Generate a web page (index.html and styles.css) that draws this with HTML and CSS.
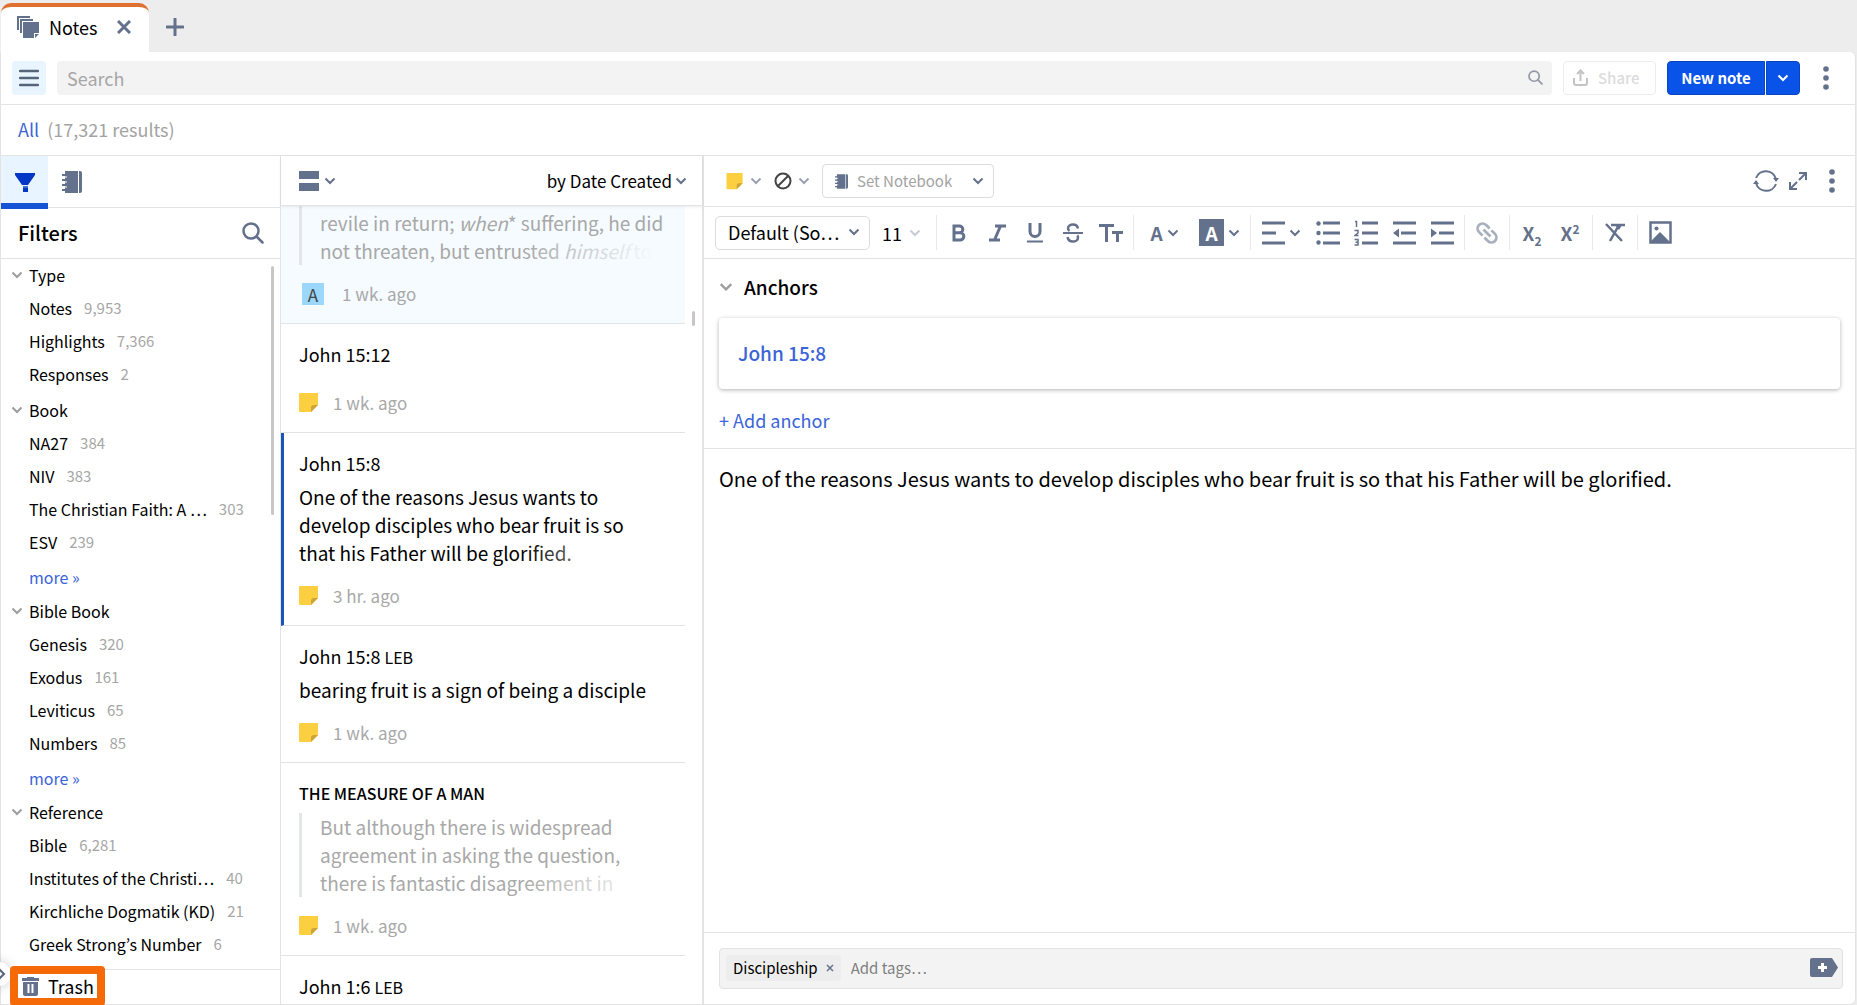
FILE: index.html
```html
<!DOCTYPE html>
<html lang="en">
<head>
  <meta charset="UTF-8">
  <meta name="viewport" content="width=device-width, initial-scale=1.0">
  <title>Notes</title>
  <link rel="stylesheet" href="styles.css">
</head>
<body>

  <!-- Shared icons -->
  <svg class="sprite" aria-hidden="true">
    <symbol id="chevron" viewBox="0 0 12 12"><path d="M1.5 3.5 6 8l4.500-4.500" fill="none" stroke="currentColor" stroke-width="2"/></symbol>
    <symbol id="note" viewBox="0 0 20 20"><path d="M1 0h18v12l-7 7H1a1 1 0 0 1-1-1V1a1 1 0 0 1 1-1z" fill="#fbcf3f"/><path d="M12 19v-4a3 3 0 0 1 3-3h4z" fill="#cda33a"/></symbol>
    <symbol id="notebook" viewBox="0 0 20 22"><path d="M3 0h13v22H3zM17 0h1a2 2 0 0 1 2 2v18a2 2 0 0 1-2 2h-1z" fill="currentColor"/><path d="M0 4h5M0 9h5M0 14h5M0 19h5" stroke="currentColor" stroke-width="2"/><path d="M3 6h2M3 11h2M3 16h2" stroke="#fff" stroke-width="1"/></symbol>
    <symbol id="search" viewBox="0 0 22 22"><circle cx="9" cy="9" r="7.500" fill="none" stroke="currentColor" stroke-width="2.500"/><path d="m14.500 14.500 6 6" stroke="currentColor" stroke-width="2.500" stroke-linecap="round"/></symbol>
    <symbol id="dots" viewBox="0 0 6 24"><circle cx="3" cy="3" r="2.800" fill="currentColor"/><circle cx="3" cy="12" r="2.800" fill="currentColor"/><circle cx="3" cy="21" r="2.800" fill="currentColor"/></symbol>
  </svg>

  <!-- Tabs -->
  <header class="tabs">
    <div class="tab">
      <svg class="tab-icon" viewBox="0 0 22 22"><path d="M0 0h13v2H2v12H0zM3 3h13v2H5v12H3z" fill="#64718c"/><path d="M6 6h16v11h-5v5H6z" fill="#64718c"/><path d="M18 22v-4h4z" fill="#64718c"/></svg>
      <span>Notes</span>
      <button class="icon-btn close" aria-label="Close tab"><svg width="14" height="14" viewBox="0 0 14 14"><path d="m1 1 12 12M13 1 1 13" stroke="currentColor" stroke-width="3"/></svg></button>
    </div>
    <button class="icon-btn add-tab" aria-label="New tab"><svg width="18" height="18" viewBox="0 0 18 18"><path d="M9 1v16M1 9h16" stroke="currentColor" stroke-width="3" stroke-linecap="round"/></svg></button>
  </header>

  <div class="window">
    <!-- Toolbar -->
    <div class="toolbar">
      <button class="menu-btn" aria-label="Menu"><svg width="20" height="18" viewBox="0 0 20 18"><path d="M1 2h18M1 9h18M1 16h18" stroke="#56647a" stroke-width="2.500" stroke-linecap="round"/></svg></button>
      <div class="search-box">
        <input type="search" placeholder="Search" aria-label="Search">
        <svg width="15" height="15"><use href="#search"/></svg>
      </div>
      <button class="share" disabled>
        <svg width="15" height="17" viewBox="0 0 15 17"><path d="M1 9v5a2 2 0 0 0 2 2h9a2 2 0 0 0 2-2V9M7.500 12V2M4 5l3.500-3.500L11 5" fill="none" stroke="#c4c4c4" stroke-width="2"/></svg>
        Share
      </button>
      <div class="split">
        <button class="primary">New note</button>
        <button class="primary arrow" aria-label="More note types"><svg width="12" height="12"><use href="#chevron"/></svg></button>
      </div>
      <button class="icon-btn" aria-label="More"><svg width="6" height="24"><use href="#dots"/></svg></button>
    </div>

    <div class="results"><a href="#">All</a> <span>(17,321 results)</span></div>

    <main class="columns">
      <!-- Filters -->
      <aside class="sidebar">
        <div class="side-tabs">
          <button class="side-tab active" aria-label="Filters"><svg width="20" height="20" viewBox="0 0 20 20"><path d="M0 1h20v2l-7 10H7L0 3zM8 14h5v6H8z" fill="#0537c6"/><path d="M8 15h5" stroke="#7fa6ee" stroke-width="1"/></svg></button>
          <button class="side-tab" aria-label="Notebooks"><svg width="20" height="22"><use href="#notebook"/></svg></button>
        </div>
        <div class="side-head">
          <h2>Filters</h2>
          <button class="icon-btn" aria-label="Search filters"><svg width="22" height="22"><use href="#search"/></svg></button>
        </div>
        <nav class="filters">
          <section>
            <h3><svg width="12" height="12"><use href="#chevron"/></svg>Type</h3>
            <a href="#"><span>Notes</span><small>9,953</small></a>
            <a href="#"><span>Highlights</span><small>7,366</small></a>
            <a href="#"><span>Responses</span><small>2</small></a>
          </section>
          <section>
            <h3><svg width="12" height="12"><use href="#chevron"/></svg>Book</h3>
            <a href="#"><span>NA27</span><small>384</small></a>
            <a href="#"><span>NIV</span><small>383</small></a>
            <a href="#"><span>The Christian Faith: A …</span><small>303</small></a>
            <a href="#"><span>ESV</span><small>239</small></a>
            <a href="#" class="more">more »</a>
          </section>
          <section>
            <h3><svg width="12" height="12"><use href="#chevron"/></svg>Bible Book</h3>
            <a href="#"><span>Genesis</span><small>320</small></a>
            <a href="#"><span>Exodus</span><small>161</small></a>
            <a href="#"><span>Leviticus</span><small>65</small></a>
            <a href="#"><span>Numbers</span><small>85</small></a>
            <a href="#" class="more">more »</a>
          </section>
          <section>
            <h3><svg width="12" height="12"><use href="#chevron"/></svg>Reference</h3>
            <a href="#"><span>Bible</span><small>6,281</small></a>
            <a href="#"><span>Institutes of the Christi…</span><small>40</small></a>
            <a href="#"><span>Kirchliche Dogmatik (KD)</span><small>21</small></a>
            <a href="#"><span>Greek Strong’s Number</span><small>6</small></a>
          </section>
          <div class="thumb"></div>
        </nav>
        <div class="side-foot">
          <div class="expander"><svg width="8" height="12" viewBox="0 0 8 12"><path d="m1 1 5 5-5 5" fill="none" stroke="#56647a" stroke-width="2"/></svg></div>
          <button class="trash">
            <svg width="17" height="19" viewBox="0 0 17 19"><path d="M0 1h5V0h7v1h5v3H0zM1 5h15v12a2 2 0 0 1-2 2H3a2 2 0 0 1-2-2z" fill="#64718c"/><path d="M6.500 7v9M10.500 7v9" stroke="#fff" stroke-width="2"/></svg>
            Trash
          </button>
        </div>
      </aside>

      <!-- Note list -->
      <section class="list">
        <div class="list-head">
          <button class="icon-btn view" aria-label="View"><svg width="20" height="20" viewBox="0 0 20 20"><path d="M0 0h20v8H0zM0 12h20v8H0z" fill="currentColor"/></svg><svg width="12" height="12"><use href="#chevron"/></svg></button>
          <button class="sort">by Date Created<svg width="12" height="12"><use href="#chevron"/></svg></button>
        </div>
        <div class="notes">
          <article class="note visited">
            <blockquote class="fade">revile in return; <i>when</i>* suffering, he did not threaten, but entrusted <i>himself</i> to</blockquote>
            <footer><span class="mark">A</span>1 wk. ago</footer>
          </article>
          <article class="note">
            <h3>John 15:12</h3>
            <footer><svg width="20" height="20"><use href="#note"/></svg>1 wk. ago</footer>
          </article>
          <article class="note selected">
            <h3>John 15:8</h3>
            <p class="fade">One of the reasons Jesus wants to develop disciples who bear fruit is so that his Father will be glorified.</p>
            <footer><svg width="20" height="20"><use href="#note"/></svg>3 hr. ago</footer>
          </article>
          <article class="note">
            <h3>John 15:8 <small>LEB</small></h3>
            <p>bearing fruit is a sign of being a disciple</p>
            <footer><svg width="20" height="20"><use href="#note"/></svg>1 wk. ago</footer>
          </article>
          <article class="note">
            <h3 class="caps">THE MEASURE OF A MAN</h3>
            <blockquote class="fade">But although there is widespread agreement in asking the question, there is fantastic disagreement in</blockquote>
            <footer><svg width="20" height="20"><use href="#note"/></svg>1 wk. ago</footer>
          </article>
          <article class="note">
            <h3>John 1:6 <small>LEB</small></h3>
          </article>
          <div class="thumb"></div>
        </div>
      </section>

      <!-- Editor -->
      <section class="editor">
        <div class="note-bar">
          <button class="icon-btn pick" aria-label="Note icon"><svg width="18" height="17"><use href="#note"/></svg><svg class="soft" width="12" height="12"><use href="#chevron"/></svg></button>
          <button class="icon-btn pick" aria-label="Highlight style"><svg width="18" height="18" viewBox="0 0 18 18"><circle cx="9" cy="9" r="7.500" fill="none" stroke="#444" stroke-width="2"/><path d="M4 14 14 4" stroke="#444" stroke-width="2"/></svg><svg class="soft" width="12" height="12"><use href="#chevron"/></svg></button>
          <label class="select notebook">
            <svg width="13" height="15"><use href="#notebook"/></svg>
            <select aria-label="Notebook"><option>Set Notebook</option></select>
            <svg width="12" height="12"><use href="#chevron"/></svg>
          </label>
          <span class="spacer"></span>
          <button class="icon-btn" aria-label="Sync"><svg width="26" height="24" viewBox="0 0 26 24"><path d="M3 9a10.500 10.500 0 0 1 20 1M23 15a10.500 10.500 0 0 1-20-1" fill="none" stroke="currentColor" stroke-width="2"/><path d="M20 9h6l-3 4zM0 15h6l-3-4z" fill="currentColor"/></svg></button>
          <button class="icon-btn expand" aria-label="Expand"><svg width="18" height="18" viewBox="0 0 18 18"><path d="M10 1h7v7M17 1l-7 7M8 17H1v-7M1 17l7-7" fill="none" stroke="currentColor" stroke-width="2"/></svg></button>
          <button class="icon-btn" aria-label="More"><svg width="6" height="24"><use href="#dots"/></svg></button>
        </div>

        <div class="format-bar">
          <label class="select font">
            <select aria-label="Font"><option>Default (So…</option></select>
            <svg width="12" height="12"><use href="#chevron"/></svg>
          </label>
          <label class="select size">
            <select aria-label="Font size"><option>11</option></select>
            <svg width="12" height="12"><use href="#chevron"/></svg>
          </label>
          <hr>
          <button aria-label="Bold"><svg width="16" height="18" viewBox="0 0 16 18"><path d="M3 2h5.500a3.300 3.300 0 0 1 0 6.700H3zM3 8.700h6.200a3.600 3.600 0 0 1 0 7.300H3z" fill="none" stroke="currentColor" stroke-width="3"/></svg></button>
          <button aria-label="Italic"><svg width="17" height="18" viewBox="0 0 17 18"><path d="M6 2h11M0 16h11M11.500 2l-6 14" fill="none" stroke="currentColor" stroke-width="3"/></svg></button>
          <button aria-label="Underline"><svg width="18" height="20" viewBox="0 0 18 20"><path d="M4 0v8.500a5 5 0 0 0 10 0V0" fill="none" stroke="currentColor" stroke-width="3"/><path d="M1 18.500h16" stroke="currentColor" stroke-width="2"/></svg></button>
          <button aria-label="Strikethrough"><svg width="20" height="20" viewBox="0 0 20 20"><path d="M15 5.500C14.500 2.800 12.500 1.500 10 1.500S5 2.800 5 5.300c0 1.200.5 2 1.500 2.700M4.500 14c.5 3 3 4.500 5.500 4.500s5-1.300 5-3.800c0-.900-.3-1.700-.8-2.200" fill="none" stroke="currentColor" stroke-width="2.500"/><path d="M0 10h20" stroke="currentColor" stroke-width="2"/></svg></button>
          <button aria-label="Text case"><svg width="24" height="18" viewBox="0 0 24 18"><path d="M0 1.500h15M7.500 1.500V18M13 8.500h11M18.500 8.500V18" fill="none" stroke="currentColor" stroke-width="3"/></svg></button>
          <hr>
          <button class="wide" aria-label="Text color"><b>A</b><svg width="12" height="12"><use href="#chevron"/></svg></button>
          <button class="wide" aria-label="Background color"><b class="boxed">A</b><svg width="12" height="12"><use href="#chevron"/></svg></button>
          <hr>
          <button class="wide" aria-label="Align"><svg width="23" height="24" viewBox="0 0 23 24"><path d="M0 2h23M0 12h14M0 22h23" stroke="currentColor" stroke-width="3"/></svg><svg width="12" height="12"><use href="#chevron"/></svg></button>
          <button aria-label="Bulleted list"><svg width="24" height="24" viewBox="0 0 24 24"><path d="M7 2h17M7 12h17M7 22h17" stroke="currentColor" stroke-width="3"/><circle cx="2.500" cy="2.500" r="2.200" fill="currentColor"/><circle cx="2.500" cy="12" r="2.200" fill="currentColor"/><circle cx="2.500" cy="21.500" r="2.200" fill="currentColor"/></svg></button>
          <button aria-label="Numbered list"><svg width="24" height="26" viewBox="0 0 24 26"><path d="M8 3h16M8 13h16M8 23h16" stroke="currentColor" stroke-width="3"/><path d="M1 1.500h1.500V7M.5 10.500h3.500V13L1 15.500h3.500M.5 19.500h3.500v5.500H.5M1.500 22.300h2" fill="none" stroke="currentColor" stroke-width="1.500"/></svg></button>
          <button aria-label="Outdent"><svg width="23" height="24" viewBox="0 0 23 24"><path d="M0 2h23M8 12h15M0 22h23" stroke="currentColor" stroke-width="3"/><path d="M6 7.500v9L0 12z" fill="currentColor"/></svg></button>
          <button aria-label="Indent"><svg width="23" height="24" viewBox="0 0 23 24"><path d="M0 2h23M8 12h15M0 22h23" stroke="currentColor" stroke-width="3"/><path d="M0 7.500v9l6-4.500z" fill="currentColor"/></svg></button>
          <hr>
          <button class="off" aria-label="Link"><svg width="30" height="30" viewBox="0 0 24 24"><g transform="rotate(45 12 12)" fill="none" stroke="currentColor" stroke-width="2.200"><path d="M11 8H7a4 4 0 0 0 0 8h4M13 8h4a4 4 0 0 1 0 8h-4M8 12h8"/></g></svg></button>
          <hr>
          <button aria-label="Subscript"><b>X<sub>2</sub></b></button>
          <button aria-label="Superscript"><b>X<sup>2</sup></b></button>
          <hr>
          <button aria-label="Clear formatting"><svg width="20" height="19" viewBox="0 0 20 19"><path d="M6 2h14M14 2 5 18M1 1l16 17" fill="none" stroke="currentColor" stroke-width="2.500"/><path d="M10 2h7l-3 5z" fill="currentColor"/></svg></button>
          <hr>
          <button aria-label="Insert image"><svg width="23" height="23" viewBox="0 0 23 23"><path d="M1.500 1.500h20v20h-20z" fill="none" stroke="currentColor" stroke-width="2.500"/><circle cx="7.500" cy="7.500" r="2" fill="currentColor"/><path d="m2 20 9-9 10 10v1H2z" fill="currentColor"/></svg></button>
        </div>

        <div class="anchors">
          <h2><svg width="14" height="14"><use href="#chevron"/></svg>Anchors</h2>
          <div class="card"><a href="#">John 15:8</a></div>
          <a href="#" class="add-anchor">+ Add anchor</a>
        </div>

        <textarea class="content" aria-label="Note text">One of the reasons Jesus wants to develop disciples who bear fruit is so that his Father will be glorified.</textarea>

        <div class="tag-row">
          <div class="tag-box">
            <span class="chip">Discipleship <button aria-label="Remove tag"><svg width="8" height="8" viewBox="0 0 8 8"><path d="m1 1 6 6M7 1 1 7" stroke="currentColor" stroke-width="1.500"/></svg></button></span>
            <input type="text" placeholder="Add tags…" aria-label="Add tags">
            <button class="tag-add" aria-label="Add tag"><svg width="28" height="19" viewBox="0 0 28 19"><path d="M2 0h20l6 9.500-6 9.500H2a2 2 0 0 1-2-2V2a2 2 0 0 1 2-2z" fill="#64718c"/><path d="M12.500 5v9M8 9.500h9" stroke="#fff" stroke-width="3"/></svg></button>
          </div>
        </div>
      </section>
    </main>
  </div>

</body>
</html>
```

FILE: styles.css
```css
* {
  box-sizing: border-box;
}

body {
  font-family: "Noto Sans CJK KR", "Open Sans", sans-serif;
  font-size: 18px;
  line-height: 28px;
  color: #000;
  margin: 0;
  height: 100vh;
  overflow: hidden;
  display: flex;
  flex-direction: column;
  background-color: #ededed;
}

h2, h3, p, blockquote {
  margin: 0;
  font-weight: 400;
}

a {
  color: #3b64d8;
  text-decoration: none;
}

button, input, select, textarea {
  font: inherit;
  color: inherit;
  border: none;
  background: none;
  padding: 0;
  margin: 0;
}

button {
  display: flex;
  align-items: center;
  cursor: pointer;
}

select {
  appearance: none;
}

input:focus, textarea:focus {
  outline: none;
}

svg {
  flex: none;
}

.sprite {
  position: absolute;
  width: 0;
  height: 0;
}

.icon-btn {
  color: #64718c;
}

/* Tabs */
.tabs {
  display: flex;
  align-items: center;
  flex: none;
  padding: 3px 0 0 1px;
}

.tab {
  display: flex;
  align-items: center;
  width: 148px;
  height: 49px;
  padding: 0 18px 6px 16px;
  background-color: #fff;
  border-top: 4px solid #e0702f;
  border-radius: 10px 10px 0 0;
}

.tab-icon {
  width: 22px;
  height: 22px;
  margin-right: 10px;
}

.close {
  margin-left: auto;
}

.add-tab {
  margin-left: 17px;
  padding-bottom: 1px;
}

/* Window */
.window {
  flex: 1;
  min-height: 0;
  display: flex;
  flex-direction: column;
  margin: 0 1px 0 0;
  background-color: #fff;
  border: 1px solid #e3e3e3;
  border-top: none;
  border-radius: 0 6px 6px 0;
}

.toolbar {
  display: flex;
  align-items: center;
  flex: none;
  height: 53px;
  padding: 0 26px 0 11px;
  border-bottom: 1px solid #e3e3e3;
}

.menu-btn {
  justify-content: center;
  width: 34px;
  height: 34px;
  background-color: #e8f4ff;
  border-radius: 4px;
}

.search-box {
  flex: 1;
  display: flex;
  align-items: center;
  height: 34px;
  margin: 0 11px;
  padding: 0 9px 1px 10px;
  background-color: #f3f3f3;
  border-radius: 4px;
  color: #9299a5;
}

.search-box input {
  flex: 1;
}

.search-box input::placeholder {
  color: #a6a6a6;
}

.share {
  gap: 10px;
  height: 34px;
  width: 93px;
  padding: 0 9px 1px;
  font-size: 15px;
  font-weight: 500;
  color: #dcdcdc;
  border: 1px solid #ececec;
  border-radius: 4px;
}

.split {
  display: flex;
  gap: 1px;
  margin: 0 23px 0 11px;
}

.primary {
  justify-content: center;
  width: 98px;
  height: 34px;
  padding-bottom: 1px;
  font-size: 15px;
  font-weight: 700;
  color: #fff;
  background-color: #0a53e8;
  border: 1px solid #0a45c0;
  border-radius: 4px 0 0 4px;
}

.arrow {
  width: 34px;
  border-radius: 0 4px 4px 0;
}

.results {
  flex: none;
  height: 51px;
  padding: 10px 17px;
  border-bottom: 1px solid #e3e3e3;
}

.results span {
  margin-left: 4px;
  color: #a3a3a3;
}

.columns {
  flex: 1;
  min-height: 0;
  display: flex;
}

/* Filters */
.sidebar {
  display: flex;
  flex-direction: column;
  flex: none;
  width: 280px;
  border-right: 1px solid #e3e3e3;
}

.side-tabs {
  display: flex;
  flex: none;
  height: 52px;
  border-bottom: 1px solid #e3e3e3;
}

.side-tab {
  justify-content: center;
  width: 47px;
  height: 53px;
  padding-bottom: 2px;
  color: #64718c;
}

.side-tab.active {
  background-color: #e8f4ff;
  background-image: linear-gradient(#1355d4, #1355d4);
  background-position: bottom;
  background-size: 100% 6px;
  background-repeat: no-repeat;
}

.side-head {
  display: flex;
  align-items: center;
  justify-content: space-between;
  flex: none;
  height: 51px;
  padding: 0 16px 0 17px;
  border-bottom: 1px solid #e3e3e3;
}

.side-head h2 {
  font-size: 20px;
  font-weight: 500;
}

.filters {
  flex: 1;
  min-height: 0;
  overflow: hidden;
  position: relative;
  font-size: 16px;
}

.filters section {
  padding-bottom: 4px;
}

.filters h3 {
  display: flex;
  align-items: center;
  gap: 6px;
  height: 32px;
  padding-left: 10px;
  font-size: 16px;
}

.filters h3 svg {
  color: #9c9c9c;
}

.filters a {
  display: flex;
  align-items: center;
  gap: 12px;
  height: 33px;
  padding-left: 28px;
  color: #000;
}

.filters a.more {
  padding-top: 4px;
  color: #3b64d8;
}

.filters small {
  font-size: 15px;
  color: #a6a6a6;
}

.thumb {
  position: absolute;
  border-radius: 2px;
  background-color: #c9c6c8;
}

.filters .thumb {
  right: 6px;
  top: 7px;
  width: 3px;
  height: 249px;
}

.side-foot {
  position: relative;
  display: flex;
  flex: none;
  height: 35px;
  border-top: 1px solid #e3e3e3;
}

.trash {
  z-index: 1;
  gap: 9px;
  width: 95px;
  height: 40px;
  margin: -4px 0 0 9px;
  padding: 0 0 0 4px;
  background-color: #fff;
  border: 8px solid #f56a07;
  border-radius: 4px;
}

.expander {
  position: absolute;
  left: -18px;
  top: -8px;
  display: flex;
  align-items: center;
  justify-content: flex-end;
  width: 28px;
  height: 24px;
  padding-right: 5px;
  background-color: #fff;
  border-radius: 12px;
  box-shadow: 0 0 12px rgba(0, 0, 0, 0.2);
}

/* Note list */
.list {
  display: flex;
  flex-direction: column;
  flex: none;
  width: 421px;
}

.list-head {
  display: flex;
  align-items: center;
  justify-content: space-between;
  flex: none;
  z-index: 1;
  height: 50px;
  padding: 0 15px 0 18px;
  background-color: #fff;
  border-bottom: 1px solid #e3e3e3;
  box-shadow: 0 1px 3px rgba(0, 0, 0, 0.08);
}

.view {
  gap: 5px;
}

.sort {
  font-size: 17px;
}

.sort svg {
  margin-left: 3px;
  color: #64718c;
}

.notes {
  flex: 1;
  min-height: 0;
  overflow: hidden;
  position: relative;
}

.notes .thumb {
  right: 7px;
  top: 105px;
  width: 3px;
  height: 15px;
}

.note {
  display: flex;
  flex-direction: column;
  margin-right: 17px;
  padding: 16px 16px 15px 18px;
  border-bottom: 1px solid #e3e3e3;
}

.note.selected {
  padding-left: 15px;
  border-left: 3px solid #1b55b8;
}

.note.visited {
  padding-top: 0;
  background-color: #f5fbff;
}

.note.visited blockquote {
  padding-top: 3px;
}

.note h3 {
  height: 28px;
  margin-bottom: 6px;
  font-size: 18px;
}

.note h3 small {
  font-size: 16px;
}

.note h3.caps {
  font-size: 16px;
  font-weight: 500;
}

.note p, .note blockquote {
  font-size: 19px;
}

.note p {
  padding-right: 10px;
}

.note blockquote {
  padding-left: 18px;
  color: #a8a8a8;
  border-left: 3px solid #e3e5e8;
}

.fade {
  position: relative;
}

.fade::after {
  content: "";
  position: absolute;
  right: 0;
  bottom: 0;
  width: 148px;
  height: 28px;
  background: linear-gradient(to right, rgba(255, 255, 255, 0), #fff 90%);
}

.visited .fade::after {
  background: linear-gradient(to right, rgba(245, 251, 255, 0), #f5fbff 90%);
}

.note footer {
  display: flex;
  align-items: center;
  gap: 14px;
  margin-top: 15px;
  font-size: 17px;
  color: #a8a8a8;
}

.mark {
  width: 22px;
  height: 22px;
  margin: 0 4px 0 3px;
  line-height: 24px;
  text-align: center;
  color: #444;
  background-color: #9bd7fb;
}

/* Editor */
.editor {
  flex: 1;
  min-width: 0;
  display: flex;
  flex-direction: column;
  border-left: 2px solid #e3e3e3;
}

.note-bar, .format-bar {
  display: flex;
  align-items: center;
  flex: none;
  height: 51px;
  padding: 0 20px 0 22px;
  border-bottom: 1px solid #e3e3e3;
}

.pick {
  gap: 6px;
  margin-right: 12px;
}

.soft {
  color: #9aa3b2;
}

.select {
  display: flex;
  align-items: center;
  color: #000;
}

.select svg {
  color: #64718c;
}

.select select {
  flex: 1;
  min-width: 0;
}

.notebook {
  gap: 9px;
  width: 172px;
  height: 34px;
  padding: 0 9px 0 12px;
  font-size: 15px;
  color: #a3a3a3;
  border: 1px solid #dcdcdc;
  border-radius: 4px;
}

.spacer {
  flex: 1;
}

.expand {
  margin: 0 22px 0 10px;
}

.format-bar {
  height: 52px;
  padding: 0 0 0 11px;
}

.font {
  width: 155px;
  height: 34px;
  padding: 0 9px 1px 12px;
  border: 1px solid #dcdcdc;
  border-radius: 5px;
}

.size {
  width: 39px;
  margin: 0 12px 0 12px;
}

.size svg {
  color: #c6ccd6;
}

.format-bar hr {
  width: 1px;
  height: 35px;
  margin: 0 3px;
  border: none;
  background-color: #e8e8e8;
}

.format-bar button {
  justify-content: center;
  width: 38px;
  height: 34px;
  color: #64718c;
}

.format-bar .wide {
  gap: 4px;
  width: 55px;
}

.format-bar .off {
  color: #a9b0bd;
}

.format-bar b {
  font-size: 19px;
}

.format-bar .boxed {
  width: 25px;
  height: 27px;
  line-height: 28px;
  color: #fff;
  background-color: #64718c;
}

.format-bar sub, .format-bar sup {
  font-size: 12px;
  line-height: 12px;
}

.anchors {
  flex: none;
  height: 190px;
  padding: 14px 15px 0;
  border-bottom: 1px solid #e3e3e3;
}

.anchors h2 {
  display: flex;
  align-items: center;
  gap: 11px;
  font-size: 19px;
  font-weight: 500;
}

.anchors h2 svg {
  color: #9c9c9c;
}

.card {
  margin: 17px 0;
  height: 71px;
  padding: 21px 19px;
  font-size: 19px;
  font-weight: 500;
  border-radius: 4px;
  box-shadow: 0 1px 4px rgba(0, 0, 0, 0.3);
}

.add-anchor {
  font-size: 18px;
}

.content {
  flex: 1;
  min-height: 0;
  padding: 16px 15px;
  font-size: 20px;
  resize: none;
}

.tag-row {
  flex: none;
  height: 72px;
  padding: 15px 12px 0 15px;
  border-top: 1px solid #e3e3e3;
}

.tag-box {
  display: flex;
  align-items: center;
  gap: 10px;
  height: 41px;
  padding: 0 4px 2px 6px;
  font-size: 15px;
  background-color: #f3f3f3;
  border: 1px solid #e3e3e3;
  border-radius: 4px;
}

.tag-box input {
  flex: 1;
}

.tag-box input::placeholder {
  color: #7f7f7f;
}

.chip {
  display: flex;
  align-items: center;
  gap: 8px;
  height: 26px;
  padding: 0 7px 0 7px;
  background-color: #ededed;
  border-radius: 4px;
}

.chip button {
  color: #64718c;
}
```
